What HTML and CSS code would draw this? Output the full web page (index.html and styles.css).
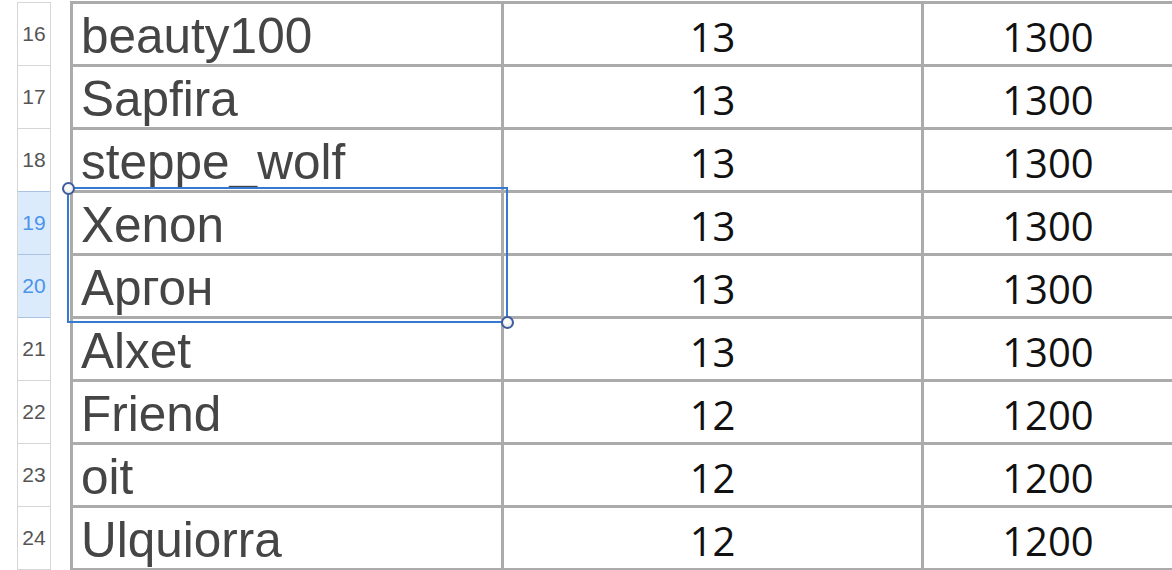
FILE: index.html
```html
<!DOCTYPE html>
<html>
<head>
<meta charset="utf-8">
<link rel="stylesheet" href="styles.css">
</head>
<body>
<div class="sheet">
  <div class="gutter">
    <div class="rh">16</div>
    <div class="rh">17</div>
    <div class="rh">18</div>
    <div class="rh sel">19</div>
    <div class="rh sel">20</div>
    <div class="rh">21</div>
    <div class="rh">22</div>
    <div class="rh">23</div>
    <div class="rh">24</div>
  </div>
  <div class="grid">
    <div class="c name">beauty100</div><div class="c num">13</div><div class="c num">1300</div>
    <div class="c name">Sapfira</div><div class="c num">13</div><div class="c num">1300</div>
    <div class="c name">steppe_wolf</div><div class="c num">13</div><div class="c num">1300</div>
    <div class="c name">Xenon</div><div class="c num">13</div><div class="c num">1300</div>
    <div class="c name">Аргон</div><div class="c num">13</div><div class="c num">1300</div>
    <div class="c name">Alxet</div><div class="c num">13</div><div class="c num">1300</div>
    <div class="c name">Friend</div><div class="c num">12</div><div class="c num">1200</div>
    <div class="c name">oit</div><div class="c num">12</div><div class="c num">1200</div>
    <div class="c name">Ulquiorra</div><div class="c num">12</div><div class="c num">1200</div>
  </div>
  <div class="selection"></div>
  <div class="handle h-tl"></div>
  <div class="handle h-br"></div>
</div>
</body>
</html>
```
FILE: styles.css
```css
html, body {
  margin: 0;
  padding: 0;
  background: #fff;
  overflow: hidden;
}
body {
  width: 1172px;
  height: 570px;
}
.sheet {
  position: relative;
  display: flex;
  align-items: flex-start;
  width: 1172px;
  height: 570px;
  overflow: hidden;
}
.gutter {
  margin-left: 17px;
  margin-top: 2px;
  width: 32px;
  border-left: 1px solid #d6d6d6;
  border-right: 1px solid #d6d6d6;
  border-top: 1px solid #d6d6d6;
  flex: none;
}
.rh {
  height: 62px;
  border-bottom: 1px solid #d6d6d6;
  font-family: "Liberation Sans", Arial, sans-serif;
  font-size: 21px;
  line-height: 62px;
  color: #555;
  text-align: center;
}
.rh.sel {
  background: #dcebfc;
  color: #4a94ea;
  border-bottom-color: #a9c3e3;
}
.gutter .rh:nth-child(3) {
  border-bottom-color: #a9c3e3;
}
.grid {
  margin-left: 19px;
  margin-top: 1px;
  flex: none;
  display: grid;
  grid-template-columns: 428px 417px 248px;
  grid-auto-rows: 60px;
  gap: 3px;
  padding: 3px 0 3px 3px;
  background: #ababab;
}
.c {
  background: #fff;
  white-space: nowrap;
  overflow: hidden;
}
.name {
  font-family: "Liberation Sans", Arial, sans-serif;
  font-size: 49.5px;
  color: #454545;
  padding: 4px 0 0 8px;
  line-height: 56px;
}
.num {
  font-family: "Open Sans", sans-serif;
  font-size: 40px;
  color: #111;
  text-align: center;
  padding-top: 6px;
  line-height: 54px;
}
.selection {
  position: absolute;
  left: 67px;
  top: 187px;
  width: 437px;
  height: 132px;
  border: 2px solid #3579d3;
}
.handle {
  position: absolute;
  width: 9px;
  height: 9px;
  border-radius: 50%;
  border: 2px solid #3e5d9c;
  background: radial-gradient(circle at 40% 35%, #ffffff 0%, #f4f4f4 50%, #d6d6d6 100%);
}
.h-tl {
  left: 62px;
  top: 182px;
}
.h-br {
  left: 501px;
  top: 316px;
}
```
